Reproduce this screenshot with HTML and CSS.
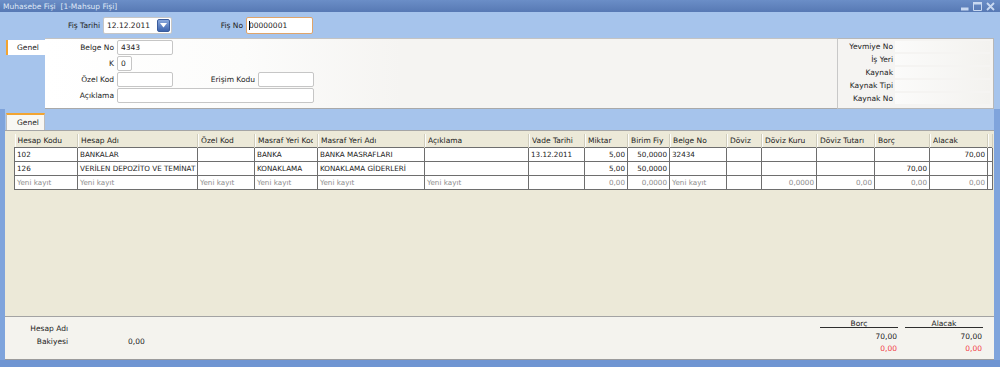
FILE: index.html
```html
<!DOCTYPE html>
<html lang="tr">

<head>
    <meta charset="UTF-8">
    <meta name="viewport" content="width=device-width, initial-scale=1.0">
    <title>Muhasebe Fişi</title>
    <link rel="stylesheet" href="styles.css">
</head>

<body>
    <div class="window">
        <!-- title bar -->
        <div class="titlebar">
            <span class="title">Muhasebe Fişi&nbsp; [1-Mahsup Fişi]</span>
            <div class="win-buttons">
                <svg width="8" height="9" viewBox="0 0 8 9"><rect x="0" y="6" width="7" height="2" /></svg>
                <svg width="9" height="9" viewBox="0 0 9 9"><path d="M0.5 1.5h8v7h-8z" fill="none" stroke-width="1" /><rect x="0" y="0" width="9" height="2" /></svg>
                <svg width="9" height="9" viewBox="0 0 9 9"><path d="M1 1l7 7M8 1l-7 7" stroke-width="1.8" fill="none" /></svg>
            </div>
        </div>

        <!-- fis tarihi / fis no -->
        <div class="topbar">
            <span class="lbl lbl-tarih">Fiş Tarihi</span>
            <div class="field date-field">
                <span>12.12.2011</span>
                <span class="drop-btn">
                    <svg width="7" height="5" viewBox="0 0 7 5"><path d="M0 0h7L3.5 4.5z" /></svg>
                </span>
            </div>
            <span class="lbl lbl-fisno">Fiş No</span>
            <div class="field fisno-field"><span class="caret"></span>00000001</div>
        </div>

        <!-- header -->
        <div class="header-area">
            <div class="side-tabs">
                <div class="vtab">Genel</div>
            </div>
            <div class="form-panel">
                <span class="lbl">Belge No</span>
                <div class="field">4343</div>
                <span></span><span></span>

                <span class="lbl">K</span>
                <div class="field k-field">0</div>
                <span></span><span></span>

                <span class="lbl">Özel Kod</span>
                <div class="field"></div>
                <span class="lbl">Erişim Kodu</span>
                <div class="field"></div>

                <span class="lbl">Açıklama</span>
                <div class="field wide-field"></div>
            </div>
            <div class="info-panel">
                <div class="info-row"><span class="lbl">Yevmiye No</span><span class="info-val"></span></div>
                <div class="info-row"><span class="lbl">İş Yeri</span><span class="info-val"></span></div>
                <div class="info-row"><span class="lbl">Kaynak</span><span class="info-val"></span></div>
                <div class="info-row"><span class="lbl">Kaynak Tipi</span><span class="info-val"></span></div>
                <div class="info-row"><span class="lbl">Kaynak No</span><span class="info-val"></span></div>
            </div>
        </div>

        <div class="lower">
            <div class="tabstrip">
                <div class="htab">Genel</div>
            </div>

            <!-- lines grid -->
            <div class="grid-panel">
                <table class="grid">
                    <colgroup>
                        <col style="width:63px">
                        <col style="width:120px">
                        <col style="width:57px">
                        <col style="width:63px">
                        <col style="width:107px">
                        <col style="width:104px">
                        <col style="width:56px">
                        <col style="width:43px">
                        <col style="width:42px">
                        <col style="width:57px">
                        <col style="width:35px">
                        <col style="width:55px">
                        <col style="width:58px">
                        <col style="width:55px">
                        <col style="width:58px">
                        <col style="width:5px">
                    </colgroup>
                    <thead>
                        <tr>
                            <th><span>Hesap Kodu</span></th>
                            <th><span>Hesap Adı</span></th>
                            <th><span>Özel Kod</span></th>
                            <th><span>Masraf Yeri Kodu</span></th>
                            <th><span>Masraf Yeri Adı</span></th>
                            <th><span>Açıklama</span></th>
                            <th><span>Vade Tarihi</span></th>
                            <th><span>Miktar</span></th>
                            <th><span>Birim Fiy</span></th>
                            <th><span>Belge No</span></th>
                            <th><span>Döviz</span></th>
                            <th><span>Döviz Kuru</span></th>
                            <th><span>Döviz Tutarı</span></th>
                            <th><span>Borç</span></th>
                            <th><span>Alacak</span></th>
                            <th></th>
                        </tr>
                    </thead>
                    <tbody>
                        <tr>
                            <td>102</td>
                            <td>BANKALAR</td>
                            <td></td>
                            <td>BANKA</td>
                            <td>BANKA MASRAFLARI</td>
                            <td></td>
                            <td>13.12.2011</td>
                            <td class="num">5,00</td>
                            <td class="num">50,0000</td>
                            <td>32434</td>
                            <td></td>
                            <td></td>
                            <td></td>
                            <td></td>
                            <td class="num">70,00</td>
                            <td></td>
                        </tr>
                        <tr>
                            <td>126</td>
                            <td>VERİLEN DEPOZİTO VE TEMİNAT</td>
                            <td></td>
                            <td>KONAKLAMA</td>
                            <td>KONAKLAMA GİDERLERİ</td>
                            <td></td>
                            <td></td>
                            <td class="num">5,00</td>
                            <td class="num">50,0000</td>
                            <td></td>
                            <td></td>
                            <td></td>
                            <td></td>
                            <td class="num">70,00</td>
                            <td></td>
                            <td></td>
                        </tr>
                        <tr class="new-row">
                            <td>Yeni kayıt</td>
                            <td>Yeni kayıt</td>
                            <td>Yeni kayıt</td>
                            <td>Yeni kayıt</td>
                            <td>Yeni kayıt</td>
                            <td>Yeni kayıt</td>
                            <td></td>
                            <td class="num">0,00</td>
                            <td class="num">0,0000</td>
                            <td>Yeni kayıt</td>
                            <td></td>
                            <td class="num">0,0000</td>
                            <td class="num">0,00</td>
                            <td class="num">0,00</td>
                            <td class="num">0,00</td>
                            <td></td>
                        </tr>
                    </tbody>
                </table>
            </div>

            <!-- totals -->
            <div class="summary">
                <div class="balance">
                    <span class="lbl">Hesap Adı</span>
                    <span></span>
                    <span class="lbl">Bakiyesi</span>
                    <span>0,00</span>
                </div>
                <div class="totals">
                    <div class="tot-head">Borç</div>
                    <div class="tot-head">Alacak</div>
                    <div class="tot-val first">70,00</div>
                    <div class="tot-val first">70,00</div>
                    <div class="tot-val diff">0,00</div>
                    <div class="tot-val diff">0,00</div>
                </div>
            </div>
        </div>
    </div>
</body>

</html>
```

FILE: styles.css
```css
body {
    margin: 0;
    font-family: "DejaVu Sans", Verdana, sans-serif;
    font-size: 7.5px;
    color: #222;
}

.window {
    width: 1000px;
    height: 367px;
    box-sizing: border-box;
    background: #a6c4ec;
    border-bottom: 7px solid #6f95d2;
    display: flex;
    flex-direction: column;
    overflow: hidden;
}

/* title bar */
.titlebar {
    height: 12px;
    flex: none;
    background: linear-gradient(#6b8ec7, #5779b4);
    color: #dfe8f7;
    display: flex;
    align-items: center;
    justify-content: space-between;
    padding: 0 5px 0 3px;
}

.win-buttons {
    display: flex;
    gap: 4px;
    align-items: center;
}

.win-buttons svg {
    fill: #c9d9f1;
    stroke: #c9d9f1;
}

.lbl {
    display: flex;
    align-items: center;
    justify-content: flex-end;
    padding-right: 3px;
    box-sizing: border-box;
    white-space: nowrap;
}

.field {
    background: #fff;
    border: 1px solid #c6c6c6;
    border-radius: 2px;
    box-sizing: border-box;
    height: 15px;
    padding: 0 3px;
    display: flex;
    align-items: center;
    white-space: nowrap;
}

/* fis tarihi row */
.topbar {
    height: 26px;
    flex: none;
    display: flex;
    align-items: center;
}

.lbl-tarih {
    width: 103px;
}

.lbl-fisno {
    width: 74px;
}

.date-field {
    width: 69px;
    height: 17px;
    padding-right: 1px;
}

.drop-btn {
    margin-left: auto;
    width: 13px;
    height: 13px;
    border-radius: 2px;
    background: linear-gradient(#8aa8dc, #3d64ae);
    border: 1px solid #3a5c9c;
    box-sizing: border-box;
    display: flex;
    align-items: center;
    justify-content: center;
}

.drop-btn svg {
    fill: #fff;
}

.fisno-field {
    width: 67px;
    height: 17px;
    border-color: #dfa46a;
    padding-left: 2px;
}

.caret {
    width: 1px;
    height: 9px;
    background: #000;
    margin-right: -1px;
}

/* header area */
.header-area {
    height: 71px;
    flex: none;
    display: flex;
}

.side-tabs {
    width: 45px;
    flex: none;
    padding: 2px 0 0 6px;
    box-sizing: border-box;
}

.vtab {
    height: 15px;
    background: #fff;
    border-left: 2px solid #f2a431;
    display: flex;
    align-items: center;
    padding-left: 9px;
}

.form-panel {
    flex: 1;
    box-sizing: border-box;
    border-top: 1px solid #c3c3c3;
    border-bottom: 1px solid #a9a9a9;
    background: linear-gradient(to right, #ffffff 0%, #fcfcfb 25%, #f5f4f2 45%, #f5f4f2 100%);
    padding-top: 1px;
    display: grid;
    grid-template-columns: 69px 56px 79px 56px;
    grid-auto-rows: 15px;
    column-gap: 3px;
    row-gap: 1px;
    align-content: start;
}

.form-panel .lbl {
    padding-right: 0;
}

.k-field {
    width: 15px;
}

.wide-field {
    grid-column: 2 / 5;
}

.info-panel {
    width: 157px;
    flex: none;
    margin-right: 6px;
    box-sizing: border-box;
    border: 1px solid #b7b7b7;
    border-left-color: #c8c8c8;
    background: #f5f4f2;
    padding-top: 1px;
}

.info-row {
    height: 13px;
    display: flex;
}

.info-row .lbl {
    width: 55px;
    padding-right: 0;
}

.info-val {
    width: 95px;
    margin: 1px 0 1px 2px;
    background: linear-gradient(to right, #fbfbfa, #f3f2ef);
}

/* lower part */
.lower {
    flex: 1;
    display: flex;
    flex-direction: column;
    border-left: 5px solid #7fa4dc;
    border-right: 6px solid #7fa4dc;
}

.tabstrip {
    height: 21px;
    flex: none;
    background: #a6c4ec;
    padding: 4px 0 0 1px;
    box-sizing: border-box;
}

.htab {
    width: 39px;
    height: 17px;
    box-sizing: border-box;
    background: #f8f7f3;
    border-top: 2px solid #f2a431;
    border-left: 1px solid #bcbcbc;
    border-right: 1px solid #bcbcbc;
    display: flex;
    align-items: center;
    padding-left: 10px;
}

.grid-panel {
    height: 186px;
    flex: none;
    box-sizing: border-box;
    background: #ece9d8;
    border-top: 1px solid #a5a5a5;
    padding: 3px 0 0 9px;
}

.grid {
    border-collapse: collapse;
    table-layout: fixed;
    width: 978px;
}

.grid th,
.grid td {
    height: 13px;
    padding: 0 3px;
    overflow: hidden;
    white-space: nowrap;
    text-align: left;
    font-weight: normal;
}

.grid th {
    background: #ece9d8;
    border-right: 1px solid #d0cdbd;
    box-shadow: inset 1px 0 #fdfdfb;
    padding-right: 4px;
}

.grid th span {
    display: block;
    overflow: hidden;
}

.grid td {
    background: #fff;
    border: 1px solid #6e6e6e;
    padding: 0 2px;
    font-size: 7.2px;
}

.grid td.num {
    text-align: right;
}

.new-row td {
    color: #8c8c8c;
}

.summary {
    flex: 1;
    box-sizing: border-box;
    background: #f4f3ee;
    border-top: 1px solid #a3a3a3;
    border-bottom: 1px solid #9b9b9b;
    display: flex;
    justify-content: space-between;
    align-items: flex-start;
}

.balance {
    display: grid;
    grid-template-columns: 63px auto;
    grid-auto-rows: 13px;
    column-gap: 60px;
    padding-top: 5px;
}

.balance span {
    display: flex;
    align-items: center;
}

.balance .lbl {
    padding-right: 0;
}

.totals {
    display: grid;
    grid-template-columns: 78px 78px;
    column-gap: 7px;
    margin-right: 11px;
    padding-top: 3px;
}

.tot-head {
    height: 8px;
    line-height: 7px;
    box-sizing: border-box;
    border-bottom: 1px solid #2e2e2e;
    text-align: center;
}

.tot-val {
    line-height: 12px;
    text-align: right;
    padding-right: 1px;
}

.tot-val.first {
    margin-top: 3px;
}

.tot-val.diff {
    color: #f23c46;
}
```
